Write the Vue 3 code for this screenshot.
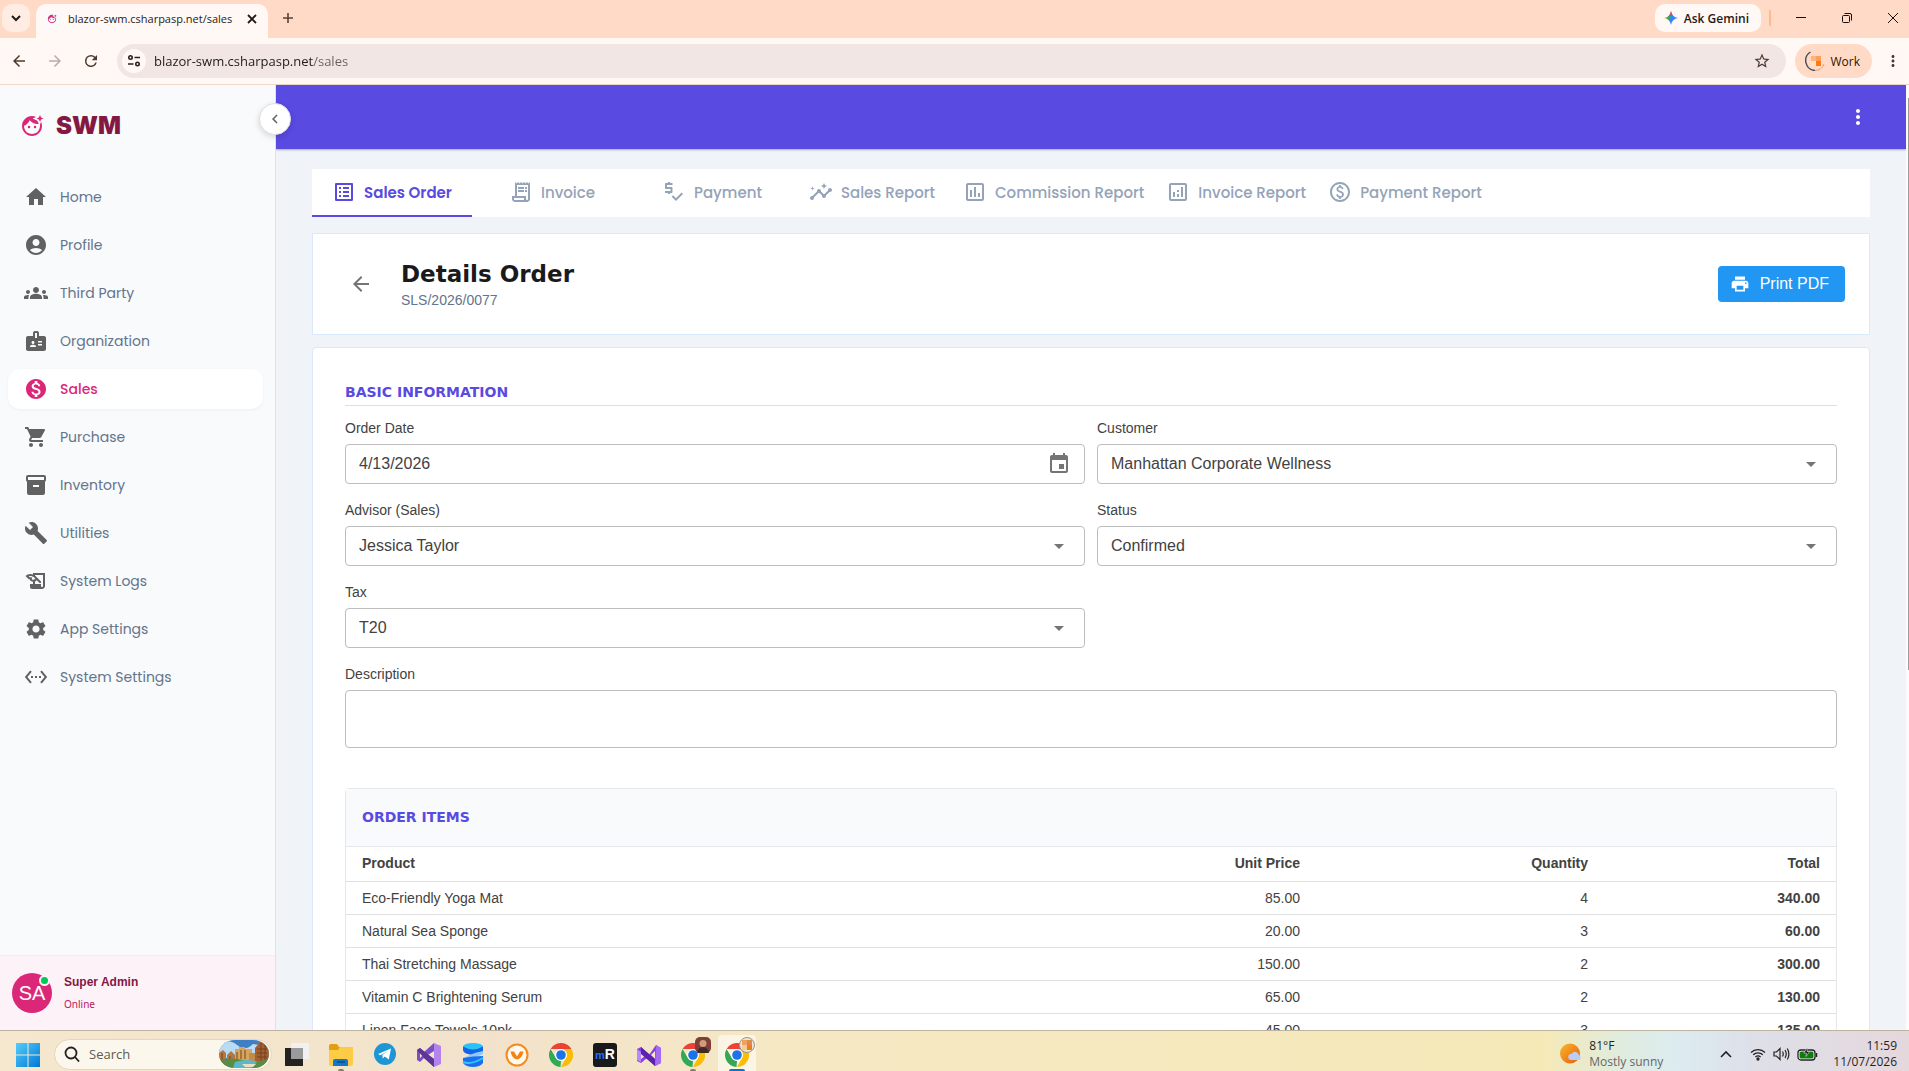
<script setup>
import { ref } from 'vue'

const icons = {
  home: 'M10 20v-6h4v6h5v-8h3L12 3 2 12h3v8z',
  profile: 'M12 2C6.48 2 2 6.48 2 12s4.48 10 10 10 10-4.48 10-10S17.52 2 12 2zm0 4c1.93 0 3.5 1.57 3.5 3.5S13.93 13 12 13s-3.5-1.57-3.5-3.5S10.07 6 12 6zm0 14c-2.03 0-4.43-.82-6.14-2.88C7.55 15.8 9.68 15 12 15s4.45.8 6.14 2.12C16.43 19.18 14.03 20 12 20z',
  groups: 'M12 12.75c1.63 0 3.07.39 4.24.9 1.08.48 1.76 1.56 1.76 2.73V18H6v-1.61c0-1.18.68-2.26 1.76-2.73 1.17-.52 2.61-.91 4.24-.91zM4 13c1.1 0 2-.9 2-2s-.9-2-2-2-2 .9-2 2 .9 2 2 2zm1.13 1.1c-.37-.06-.74-.1-1.13-.1-.99 0-1.93.21-2.78.58C.48 14.9 0 15.62 0 16.43V18h4.5v-1.61c0-.83.23-1.61.63-2.29zM20 13c1.1 0 2-.9 2-2s-.9-2-2-2-2 .9-2 2 .9 2 2 2zm4 3.43c0-.81-.48-1.53-1.22-1.85-.85-.37-1.79-.58-2.78-.58-.39 0-.76.04-1.13.1.4.68.63 1.46.63 2.29V18H24v-1.57zM12 6c1.66 0 3 1.34 3 3s-1.34 3-3 3-3-1.34-3-3 1.34-3 3-3z',
  badge: 'M20 7h-5V4c0-1.1-.9-2-2-2h-2c-1.1 0-2 .9-2 2v3H4c-1.1 0-2 .9-2 2v11c0 1.1.9 2 2 2h16c1.1 0 2-.9 2-2V9c0-1.1-.9-2-2-2zM9 12c.83 0 1.5.67 1.5 1.5S9.83 15 9 15s-1.5-.67-1.5-1.5S8.17 12 9 12zm3 6H6v-.75c0-1 2-1.5 3-1.5s3 .5 3 1.5V18zm1-9h-2V4h2v5zm5 7.5h-4V15h4v1.5zm0-3h-4V12h4v1.5z',
  money: 'M12 2C6.48 2 2 6.48 2 12s4.48 10 10 10 10-4.48 10-10S17.52 2 12 2zm1.41 16.09V20h-2.67v-1.93c-1.71-.36-3.16-1.46-3.27-3.4h1.96c.1 1.05.82 1.87 2.65 1.87 1.96 0 2.4-.98 2.4-1.59 0-.83-.44-1.61-2.67-2.14-2.48-.6-4.18-1.62-4.18-3.67 0-1.72 1.39-2.84 3.11-3.21V4h2.67v1.95c1.86.45 2.79 1.86 2.85 3.39H14.3c-.05-1.11-.64-1.87-2.22-1.87-1.5 0-2.4.68-2.4 1.64 0 .84.65 1.39 2.67 1.91s4.18 1.39 4.18 3.91c-.01 1.83-1.38 2.83-3.12 3.16z',
  cart: 'M7 18c-1.1 0-1.99.9-1.99 2S5.9 22 7 22s2-.9 2-2-.9-2-2-2zM1 2v2h2l3.6 7.59-1.35 2.45c-.16.28-.25.61-.25.96 0 1.1.9 2 2 2h12v-2H7.42c-.14 0-.25-.11-.25-.25l.03-.12.9-1.63h7.45c.75 0 1.41-.41 1.75-1.03l3.58-6.49c.08-.14.12-.31.12-.48 0-.55-.45-1-1-1H5.21l-.94-2H1zm16 16c-1.1 0-1.99.9-1.99 2s.89 2 1.99 2 2-.9 2-2-.9-2-2-2z',
  box: 'M20 2H4c-1 0-2 .9-2 2v3.01c0 .72.43 1.34 1 1.69V20c0 1.1 1.1 2 2 2h14c.9 0 2-.9 2-2V8.7c.57-.35 1-.97 1-1.69V4c0-1.1-1-2-2-2zm-5 12H9v-2h6v2zm5-7H4V4h16v3z',
  wrench: 'M22.7 19l-9.1-9.1c.9-2.3.4-5-1.5-6.9-2-2-5-2.4-7.4-1.3L9 6 6 9 1.6 4.7C.4 7.1.9 10.1 2.9 12.1c1.9 1.9 4.6 2.4 6.9 1.5l9.1 9.1c.4.4 1 .4 1.4 0l2.3-2.3c.5-.4.5-1.1.1-1.4z',
  logs: 'M9 4v1.38c-.83-.33-1.72-.5-2.61-.5-1.79 0-3.58.68-4.95 2.05l3.33 3.33h1.11v1.11c.86.86 1.98 1.31 3.11 1.36V15H6v3c0 1.1.9 2 2 2h10c1.66 0 3-1.34 3-3V4H9zm-1.11 6.41V8.26H5.61L4.57 7.22a5.07 5.07 0 0 1 1.82-.34c1.34 0 2.59.52 3.54 1.46l1.41 1.41-.2.2a2.7 2.7 0 0 1-1.92.8c-.47 0-.93-.12-1.33-.34zM19 17c0 .55-.45 1-1 1s-1-.45-1-1v-2h-6v-2.59c.57-.23 1.1-.57 1.56-1.03l.2-.2L15.59 14H17v-1.41l-6-5.97V6h8v11z',
  gear: 'M19.14 12.94c.04-.3.06-.61.06-.94 0-.32-.02-.64-.07-.94l2.03-1.58c.18-.14.23-.41.12-.61l-1.92-3.32c-.12-.22-.37-.29-.59-.22l-2.39.96c-.5-.38-1.03-.7-1.62-.94l-.36-2.54c-.04-.24-.24-.41-.48-.41h-3.84c-.24 0-.43.17-.47.41l-.36 2.54c-.59.24-1.13.57-1.62.94l-2.39-.96c-.22-.08-.47 0-.59.22L2.74 8.87c-.12.21-.08.47.12.61l2.03 1.58c-.05.3-.09.63-.09.94s.02.64.07.94l-2.03 1.58c-.18.14-.23.41-.12.61l1.92 3.32c.12.22.37.29.59.22l2.39-.96c.5.38 1.03.7 1.62.94l.36 2.54c.05.24.24.41.48.41h3.84c.24 0 .44-.17.47-.41l.36-2.54c.59-.24 1.13-.56 1.62-.94l2.39.96c.22.08.47 0 .59-.22l1.92-3.32c.12-.22.07-.47-.12-.61l-2.01-1.58zM12 15.6c-1.98 0-3.6-1.62-3.6-3.6s1.62-3.6 3.6-3.6 3.6 1.62 3.6 3.6-1.62 3.6-3.6 3.6z',
  ethernet: 'M7.77 6.76L6.23 5.48.82 12l5.41 6.52 1.54-1.28L3.42 12l4.35-5.24zM7 13h2v-2H7v2zm10-2h-2v2h2v-2zm-6 2h2v-2h-2v2zm6.77-7.52l-1.54 1.28L20.58 12l-4.35 5.24 1.54 1.28L23.18 12l-5.41-6.52z',
  list: 'M19 5v14H5V5h14m1.1-2H3.9c-.5 0-.9.4-.9.9v16.2c0 .4.4.9.9.9h16.2c.4 0 .9-.5.9-.9V3.9c0-.5-.5-.9-.9-.9zM11 7h6v2h-6V7zm0 4h6v2h-6v-2zm0 4h6v2h-6zM7 7h2v2H7zm0 4h2v2H7zm0 4h2v2H7z',
  receipt: 'M19.5 3.5L18 2l-1.5 1.5L15 2l-1.5 1.5L12 2l-1.5 1.5L9 2 7.5 3.5 6 2v14H3v3c0 1.66 1.34 3 3 3h12c1.66 0 3-1.34 3-3V2l-1.5 1.5zM15 20H6c-.55 0-1-.45-1-1v-1h10v2zm4-1c0 .55-.45 1-1 1s-1-.45-1-1v-3H8V5h11v14zM9 7h6v2H9zm7 0h2v2h-2zM9 10h6v2H9zm7 0h2v2h-2z',
  priceCheck: 'M10.5 3H8V2H6v1H4c-.55 0-1 .45-1 1v4c0 .55.45 1 1 1h4.500v2H3v2h3v1h2v-1h1.500c.55 0 1-.45 1-1V8c0-.55-.45-1-1-1H5V5h5.500V3zM19.590 12.520l-5.660 5.650-2.830-2.830-1.420 1.420L13.930 21 21 13.930z',
  insights: 'M21 8c-1.45 0-2.26 1.44-1.93 2.51l-3.55 3.56c-.3-.09-.74-.09-1.04 0l-2.55-2.55C12.27 10.45 11.46 9 10 9c-1.45 0-2.27 1.44-1.93 2.52l-4.56 4.55C2.44 15.74 1 16.55 1 18c0 1.1.9 2 2 2 1.45 0 2.26-1.44 1.93-2.51l4.55-4.56c.3.09.74.09 1.04 0l2.55 2.55C12.73 16.55 13.54 18 15 18c1.45 0 2.27-1.44 1.93-2.52l3.56-3.55c1.07.33 2.51-.48 2.51-1.93 0-1.1-.9-2-2-2zM15 9l.94-2.07L18 6l-2.06-.93L15 3l-.92 2.07L12 6l2.08.93zM3.5 11L4 9l2-.5L4 8l-.5-2L3 8l-2 .5L3 9z',
  assessment: 'M19 3H5c-1.1 0-2 .9-2 2v14c0 1.1.9 2 2 2h14c1.1 0 2-.9 2-2V5c0-1.1-.9-2-2-2zm0 16H5V5h14v14zM7 10h2v7H7zm4-3h2v10h-2zm4 6h2v4h-2z',
  analytics: 'M19 3H5c-1.1 0-2 .9-2 2v14c0 1.1.9 2 2 2h14c1.1 0 2-.9 2-2V5c0-1.1-.9-2-2-2zm0 16H5V5h14v14zM7 12h2v5H7zm8-5h2v10h-2zm-4 7h2v3h-2zm0-4h2v2h-2z',
  paid: 'M12 2C6.48 2 2 6.48 2 12s4.48 10 10 10 10-4.48 10-10S17.52 2 12 2zm0 18c-4.41 0-8-3.59-8-8s3.59-8 8-8 8 3.59 8 8-3.59 8-8 8zm.89-8.9c-1.78-.59-2.64-.96-2.64-1.9 0-1.02 1.11-1.39 1.81-1.39 1.31 0 1.79.99 1.9 1.34l1.58-.67c-.15-.44-.82-1.91-2.66-2.23V5h-1.75v1.26c-2.6.56-2.62 2.85-2.62 2.96 0 2.27 2.25 2.91 3.35 3.31 1.58.56 2.28 1.07 2.28 2.03 0 1.13-1.05 1.61-1.98 1.61-1.82 0-2.34-1.87-2.4-2.09l-1.66.67c.63 2.19 2.28 2.78 3.02 2.96V19h1.75v-1.24c.52-.09 3.02-.59 3.02-3.22.01-1.39-.6-2.61-3-3.44z',
  back: 'M20 11H7.83l5.59-5.59L12 4l-8 8 8 8 1.41-1.41L7.83 13H20v-2z',
  forward: 'M12 4l-1.41 1.41L16.17 11H4v2h12.17l-5.58 5.59L12 20l8-8z',
  chevron: 'M15.41 7.41L14 6l-6 6 6 6 1.41-1.41L10.83 12z',
  print: 'M19 8H5c-1.66 0-3 1.34-3 3v6h4v4h12v-4h4v-6c0-1.66-1.34-3-3-3zm-3 11H8v-5h8v5zm3-7c-.55 0-1-.45-1-1s.45-1 1-1 1 .45 1 1-.45 1-1 1zm-1-9H6v4h12V3z',
  event: 'M17 12h-5v5h5v-5zM16 1v2H8V1H6v2H5c-1.11 0-1.99.9-1.99 2L3 19c0 1.1.89 2 2 2h14c1.1 0 2-.9 2-2V5c0-1.1-.9-2-2-2h-1V1h-2zm3 18H5V8h14v11z',
  drop: 'M7 10l5 5 5-5z',
  dots: 'M12 8c1.1 0 2-.9 2-2s-.9-2-2-2-2 .9-2 2 .9 2 2 2zm0 2c-1.1 0-2 .9-2 2s.9 2 2 2 2-.9 2-2-.9-2-2-2zm0 6c-1.1 0-2 .9-2 2s.9 2 2 2 2-.9 2-2-.9-2-2-2z',
  reload: 'M17.65 6.35A7.95 7.95 0 0 0 12 4a8 8 0 1 0 7.73 10h-2.08A6 6 0 1 1 12 6c1.66 0 3.14.69 4.22 1.78L13 11h7V4z',
  star: 'M22 9.24l-7.19-.62L12 2 9.19 8.63 2 9.24l5.46 4.73L5.82 21 12 17.27 18.18 21l-1.63-7.03L22 9.24zM12 15.4l-3.76 2.27 1-4.28-3.32-2.88 4.38-.38L12 6.1l1.71 4.04 4.38.38-3.32 2.88 1 4.28L12 15.4z',
  face: 'M19.89 10.75c.07.41.11.82.11 1.25 0 4.41-3.59 8-8 8s-8-3.59-8-8c0-.05.01-.1 0-.14 2.6-.98 4.69-2.99 5.74-5.55C11.58 8.56 14.37 10 17.5 10c.45 0 .89-.04 1.33-.1l-.6-1.32-.88-1.93-1.93-.88-2.79-1.27 2.79-1.27.71-.32C14.87 2.33 13.47 2 12 2 6.48 2 2 6.48 2 12s4.48 10 10 10 10-4.48 10-10c0-1.47-.33-2.87-.9-4.13l-1.21 2.88zM9 11.75a1.25 1.25 0 1 0 0 2.5 1.25 1.25 0 0 0 0-2.5zm6 0a1.25 1.25 0 1 0 0 2.5 1.25 1.25 0 0 0 0-2.5zM20 1l-1.1 2.4-2.4 1.1 2.4 1.1L20 8l1.1-2.4 2.4-1.1-2.4-1.1z',
}

const nav = [
  ['Home', 'home'],
  ['Profile', 'profile'],
  ['Third Party', 'groups'],
  ['Organization', 'badge'],
  ['Sales', 'money'],
  ['Purchase', 'cart'],
  ['Inventory', 'box'],
  ['Utilities', 'wrench'],
  ['System Logs', 'logs'],
  ['App Settings', 'gear'],
  ['System Settings', 'ethernet'],
]

const tabs = [
  ['Sales Order', 'list'],
  ['Invoice', 'receipt'],
  ['Payment', 'priceCheck'],
  ['Sales Report', 'insights'],
  ['Commission Report', 'assessment'],
  ['Invoice Report', 'analytics'],
  ['Payment Report', 'paid'],
]

const selects = [
  { id: 'customer', label: 'Customer', value: 'Manhattan Corporate Wellness' },
  { id: 'advisor', label: 'Advisor (Sales)', value: 'Jessica Taylor' },
  { id: 'status', label: 'Status', value: 'Confirmed' },
  { id: 'tax', label: 'Tax', value: 'T20' },
]

const items = [
  ['Eco-Friendly Yoga Mat', '85.00', '4', '340.00'],
  ['Natural Sea Sponge', '20.00', '3', '60.00'],
  ['Thai Stretching Massage', '150.00', '2', '300.00'],
  ['Vitamin C Brightening Serum', '65.00', '2', '130.00'],
  ['Linen Face Towels 10pk', '45.00', '3', '135.00'],
]

const orderDate = ref('4/13/2026')
const description = ref('')
const address = ref('blazor-swm.csharpasp.net/sales')
</script>

<template>
  <div class="screen">
    <header class="browser">
      <div class="tabstrip">
        <button class="tab-search" aria-label="Search tabs">
          <svg width="16" height="16" viewBox="0 0 16 16" fill="none"><path d="M4 6l4 4 4-4" stroke="currentColor" stroke-width="2" /></svg>
        </button>
        <div class="page-tab">
          <span class="favicon"><svg width="10" height="10" viewBox="0 0 24 24"><path :d="icons.face" /></svg></span>
          <span class="page-tab-title">blazor-swm.csharpasp.net/sales</span>
          <button class="plain" aria-label="Close tab">
            <svg width="10" height="10" viewBox="0 0 10 10"><path d="M1 1l8 8M9 1l-8 8" stroke="currentColor" stroke-width="1.800" /></svg>
          </button>
        </div>
        <button class="plain new-tab" aria-label="New tab">
          <svg width="12" height="12" viewBox="0 0 12 12"><path d="M6 1v10M1 6h10" stroke="currentColor" stroke-width="1.600" /></svg>
        </button>
        <div class="window-tools">
          <button class="gemini">
            <svg width="14" height="14" viewBox="0 0 14 14">
              <defs>
                <linearGradient id="gem" x1="0" y1="0.3" x2="1" y2="0.6">
                  <stop offset="0" stop-color="#fbbc04" /><stop offset=".35" stop-color="#34a853" /><stop offset=".55" stop-color="#3186ff" /><stop offset="1" stop-color="#3186ff" />
                </linearGradient>
              </defs>
              <path d="M7 0c.7 4 3 6.300 7 7-4 .7-6.300 3-7 7-.7-4-3-6.300-7-7 4-.7 6.300-3 7-7z" fill="url(#gem)" />
              <path d="M7 0c.4 2 1 3.500 2 4.700L5 5C6 3.600 6.600 2 7 0z" fill="#ea4350" />
            </svg>
            Ask Gemini
          </button>
          <span class="bar"></span>
          <button class="win-btn" aria-label="Minimize"><svg width="10" height="10" viewBox="0 0 10 10"><path d="M0 4.500h10" stroke="currentColor" /></svg></button>
          <button class="win-btn" aria-label="Restore"><svg width="10" height="10" viewBox="0 0 10 10" fill="none" stroke="currentColor"><rect x=".5" y="2.500" width="7" height="7" rx="1" /><path d="M2.500.5H8a1.500 1.500 0 0 1 1.500 1.500v5.500" /></svg></button>
          <button class="win-btn last" aria-label="Close"><svg width="10" height="10" viewBox="0 0 10 10"><path d="M0 0l10 10M10 0L0 10" stroke="currentColor" /></svg></button>
        </div>
      </div>
      <div class="toolbar">
        <button class="tool" aria-label="Back"><svg width="18" height="18" viewBox="0 0 24 24"><path :d="icons.back" /></svg></button>
        <button class="tool dim" aria-label="Forward"><svg width="18" height="18" viewBox="0 0 24 24"><path :d="icons.forward" /></svg></button>
        <button class="tool" aria-label="Reload"><svg width="18" height="18" viewBox="0 0 24 24"><path :d="icons.reload" /></svg></button>
        <div class="omnibox">
          <button class="site-info" aria-label="Site information">
            <svg width="14" height="14" viewBox="0 0 14 14" fill="none" stroke="currentColor" stroke-width="1.600"><circle cx="3.500" cy="3.500" r="1.700" /><path d="M7.500 3.500H13M1 10h5.500" /><circle cx="10.500" cy="10" r="1.700" /></svg>
          </button>
          <input v-model="address" class="address" type="text" aria-label="Address" />
          <button class="plain" aria-label="Bookmark"><svg width="18" height="18" viewBox="0 0 24 24"><path :d="icons.star" /></svg></button>
        </div>
        <button class="work">
          <svg width="20" height="20" viewBox="0 0 20 20">
            <path d="M5.500 1A10 10 0 0 0 10 19.500" fill="none" stroke="#4b4a55" stroke-width="1.400" />
            <path d="M10 19.500A10 10 0 0 0 19 13" fill="none" stroke="#e0a070" />
            <path d="M6 5h5v5H6z" fill="#ffb27a" /><path d="M11 5h5v5h-5z" fill="#ff9f5a" /><path d="M6 10h5v5H6z" fill="#ffe3c8" /><path d="M11 10h5v5h-5z" fill="#ff7a0f" />
          </svg>
          Work
        </button>
        <button class="plain menu" aria-label="Browser menu"><svg width="18" height="18" viewBox="0 0 24 24"><path :d="icons.dots" /></svg></button>
      </div>
    </header>

    <div class="app">
      <aside class="sidebar">
        <div class="brand">
          <svg class="brand-icon" width="24" height="24" viewBox="0 0 24 24"><path :d="icons.face" /></svg>
          <span>SWM</span>
        </div>
        <button class="collapse" aria-label="Collapse sidebar"><svg width="18" height="18" viewBox="0 0 24 24"><path :d="icons.chevron" /></svg></button>
        <nav class="nav">
          <a v-for="[label, icon] in nav" :key="label" href="#" :class="{ active: label === 'Sales' }">
            <svg width="24" height="24" viewBox="0 0 24 24"><path :d="icons[icon]" /></svg>
            {{ label }}
          </a>
        </nav>
        <div class="user">
          <div class="avatar">SA<span class="presence"></span></div>
          <div class="user-text">
            <div class="user-name">Super Admin</div>
            <div class="user-state">Online</div>
          </div>
        </div>
      </aside>

      <div class="content">
        <div class="appbar">
          <button class="plain" aria-label="More"><svg width="24" height="24" viewBox="0 0 24 24"><path :d="icons.dots" /></svg></button>
        </div>
        <main class="main">
          <nav class="tabs">
            <a v-for="([label, icon], i) in tabs" :key="label" href="#" :class="{ active: i === 0 }">
              <svg width="24" height="24" viewBox="0 0 24 24"><path :d="icons[icon]" /></svg>
              {{ label }}
            </a>
          </nav>

          <section class="title-card">
            <button class="go-back" aria-label="Back to orders"><svg width="24" height="24" viewBox="0 0 24 24"><path :d="icons.back" /></svg></button>
            <div class="titles">
              <h1>Details Order</h1>
              <p>SLS/2026/0077</p>
            </div>
            <button class="print">
              <svg width="20" height="20" viewBox="0 0 24 24"><path :d="icons.print" /></svg>
              Print PDF
            </button>
          </section>

          <section class="form-card">
            <h2 class="section-title">BASIC INFORMATION</h2>
            <form class="form">
              <div class="field">
                <label for="order-date">Order Date</label>
                <div class="control">
                  <input id="order-date" v-model="orderDate" type="text" />
                  <svg width="24" height="24" viewBox="0 0 24 24"><path :d="icons.event" /></svg>
                </div>
              </div>
              <div v-for="s in selects" :key="s.id" class="field">
                <label :for="s.id">{{ s.label }}</label>
                <div class="control">
                  <select :id="s.id"><option>{{ s.value }}</option></select>
                  <svg width="24" height="24" viewBox="0 0 24 24"><path :d="icons.drop" /></svg>
                </div>
              </div>
              <div class="field wide">
                <label for="description">Description</label>
                <textarea id="description" v-model="description"></textarea>
              </div>
            </form>

            <div class="items">
              <h2 class="items-title">ORDER ITEMS</h2>
              <table>
                <colgroup><col /><col class="w-mid" /><col class="w-mid" /><col class="w-end" /></colgroup>
                <thead>
                  <tr><th>Product</th><th>Unit Price</th><th>Quantity</th><th>Total</th></tr>
                </thead>
                <tbody>
                  <tr v-for="row in items" :key="row[0]"><td v-for="cell in row" :key="cell">{{ cell }}</td></tr>
                </tbody>
              </table>
            </div>
          </section>
        </main>
      </div>
      <div class="scroll"><div class="thumb"></div></div>
    </div>

    <footer class="taskbar">
      <button class="task" aria-label="Start">
        <svg width="24" height="24" viewBox="0 0 24 24">
          <defs><linearGradient id="win" x1="0" y1="0" x2="1" y2="1"><stop offset="0" stop-color="#55cdfd" /><stop offset="1" stop-color="#0078d4" /></linearGradient></defs>
          <path d="M0 0h11.500v11.500H0zM12.500 0H24v11.500H12.500zM0 12.500h11.500V24H0zM12.500 12.500H24V24H12.500z" fill="url(#win)" />
        </svg>
      </button>
      <label class="search">
        <svg width="16" height="16" viewBox="0 0 16 16" fill="none" stroke="#222" stroke-width="1.800"><circle cx="7" cy="7" r="5.500" /><path d="M11 11l4 4.500" /></svg>
        <input type="text" placeholder="Search" aria-label="Search" />
        <svg width="50" height="28" viewBox="0 0 50 28">
          <defs><clipPath id="oval"><rect width="50" height="28" rx="16" /></clipPath></defs>
          <g clip-path="url(#oval)">
            <rect width="50" height="28" fill="#3f7fc4" />
            <path d="M0 4q10-6 18 1t16-1l16 2v12H0z" fill="#b9dbf3" />
            <path d="M0 13l4-3 3 3v12H0zM8 15l4-4 4 4v8H8z" fill="#b5763f" />
            <path d="M16 9h4V7h6v2h7v14H16z" fill="#d9a55c" />
            <path d="M30 13h7v9h-7z" fill="#c48a4c" />
            <path d="M36 8l6-7 8 6v18H36z" fill="#a85f2e" />
            <path d="M38 9h10M38 13h10M38 17h10M42 3v18M46 5v16M18 12v7M22 10v9M26 10v9M11 16v5M3 13v8" stroke="#6d4426" />
            <path d="M0 20q12-3 24 0t26-1v9H0z" fill="#5c8c43" />
            <path d="M16 22q14-4 22 0l-6 6H14z" fill="#5bb8c9" />
            <path d="M23 24h14l-3 3h-8z" fill="#e8dfc4" />
          </g>
        </svg>
      </label>
      <button class="task" aria-label="Task view">
        <svg width="24" height="24" viewBox="0 0 24 24"><rect y="5" width="18" height="18" fill="#222" /><rect x="6" y="0" width="18" height="16" fill="#f1f1f1" /><rect x="6" y="5" width="12" height="11" fill="#9a9a9a" /></svg>
      </button>
      <button class="task" aria-label="File Explorer">
        <svg width="24" height="24" viewBox="0 0 24 24"><path d="M0 3q0-2 2-2h6l2 3h12q2 0 2 2v15H0z" fill="#e0a011" /><path d="M0 7h9l2-3h11q2 0 2 2v15q0 2-2 2H2q-2 0-2-2z" fill="#fdcb45" /><path d="M4 23v-5q0-2 2-2h11q2 0 2 2v5z" fill="#1277c9" /><path d="M8 19h8" stroke="#0a5596" stroke-width="2" /></svg>
        <i class="open"></i>
      </button>
      <button class="task" aria-label="Telegram">
        <svg width="22" height="22" viewBox="0 0 22 22"><circle cx="11" cy="11" r="11" fill="#1f96d4" /><path d="M4 11l13-5.500-2.200 11-4-3-2 2-.5-3.500L14 8l-7.500 4.200z" fill="#fff" /></svg>
      </button>
      <button class="task" aria-label="Visual Studio">
        <svg width="24" height="24" viewBox="0 0 24 24"><path d="M0 7l3-2 4 4L17 0v8l-6 4 6 4v8L7 15l-4 4-3-2zM3 9v6l3-3z" fill="#7a4fc0" fill-rule="evenodd" /><path d="M0 7l3-2 14 11v8L7 15z" fill="#5d3594" /><path d="M17 0l7 3v18l-7 3z" fill="#b583ee" /></svg>
      </button>
      <button class="task" aria-label="Database tool">
        <svg width="22" height="24" viewBox="0 0 22 24"><ellipse cx="11" cy="3.500" rx="10" ry="3.500" fill="#27c3f5" /><path d="M1 3.500q10 6 20 0V8q-2 3-10 4Q1 11 1 7z" fill="#1563e8" /><path d="M21 8v3L5 18l-3-3q8-5 19-7z" fill="#8ec9fb" /><path d="M1 15q10-2 20-2v7q-3 4-10 4T1 20z" fill="#1a6ff0" /><path d="M1 19q9 3 20-4" fill="none" stroke="#2ec4f6" stroke-width="2" /></svg>
      </button>
      <button class="task" aria-label="Password manager">
        <svg width="24" height="24" viewBox="0 0 24 24"><circle cx="12" cy="12" r="10.500" fill="#fff9f0" stroke="#f58a1f" stroke-width="2" /><path d="M5.500 8.500H9l3 5 3-5h3.500q-1.500 7-6.500 8-5-1-6.500-8z" fill="#f5820f" /><path d="M9.500 8h5L12 12z" fill="#fff9f0" /></svg>
      </button>
      <button class="task" aria-label="Chrome">
        <svg width="24" height="24" viewBox="0 0 24 24"><path d="M12 6h10.400A12 12 0 0 1 12 24l5-9z" fill="#fbbc04" /><path d="M1.600 6A12 12 0 0 1 22.400 6H12z" fill="#ea4335" /><path d="M1.600 6l5.200 9L12 18l-.5 6A12 12 0 0 1 1.600 6z" fill="#34a853" /><circle cx="12" cy="12" r="6" fill="#fff" /><circle cx="12" cy="12" r="4.800" fill="#1a73e8" /></svg>
      </button>
      <button class="task" aria-label="Remote connections">
        <span class="mr"><b>m</b><em>R</em></span>
      </button>
      <button class="task" aria-label="Visual Studio Preview">
        <svg width="24" height="24" viewBox="0 0 24 24"><path d="M0 6l4-2 8 8 7-10 5 3v15l-6 3-8-8-6 5-4-2z" fill="#8b3fe0" /><path d="M4 9l4 4-4 3zM18 8v8l-4-4z" fill="#f5e8c4" /><path d="M19 2l5 3v15l-6 3z" fill="#a66bf5" /><path d="M0 6l4 3v10l-4-2z" fill="#b78af8" /><path d="M4 4l14 12v7L4 11z" fill="#5a22ad" /></svg>
      </button>
      <button v-for="who in ['person', 'work']" :key="who" class="task" :class="{ current: who === 'work' }" aria-label="Chrome profile">
        <svg width="24" height="24" viewBox="0 0 24 24"><path d="M12 6h10.400A12 12 0 0 1 12 24l5-9z" fill="#fbbc04" /><path d="M1.600 6A12 12 0 0 1 22.400 6H12z" fill="#ea4335" /><path d="M1.600 6l5.200 9L12 18l-.5 6A12 12 0 0 1 1.600 6z" fill="#34a853" /><circle cx="12" cy="12" r="6" fill="#fff" /><circle cx="12" cy="12" r="4.800" fill="#1a73e8" /></svg>
        <svg v-if="who === 'person'" class="corner" width="16" height="16" viewBox="0 0 16 16"><rect width="16" height="16" rx="5" fill="#7d3f37" /><circle cx="8" cy="6.500" r="3.500" fill="#d39b7b" /><path d="M2 16q1-6 6-6t6 6z" fill="#402a28" /></svg>
        <svg v-else class="corner" width="16" height="16" viewBox="0 0 16 16"><circle cx="8" cy="8" r="7.500" fill="#efe4cf" stroke="#9b958a" /><path d="M3 3h5v5H3z" fill="#f0a060" /><path d="M8 3h5v5H8z" fill="#e08a45" /><path d="M3 8h5v5H3z" fill="#f5c99c" /><path d="M8 8h5v5H8z" fill="#ee7c1c" /></svg>
        <i :class="who === 'work' ? 'focus' : 'open'"></i>
      </button>

      <div class="tray">
        <div class="weather">
          <svg width="22" height="22" viewBox="0 0 22 22"><defs><linearGradient id="sun" x1="0" y1="0" x2="1" y2="1"><stop offset="0" stop-color="#f7b92b" /><stop offset="1" stop-color="#ea5a0c" /></linearGradient></defs><circle cx="10" cy="10.500" r="10" fill="url(#sun)" /><path d="M11 17a3 3 0 0 1 .5-6 4 4 0 0 1 7.500 1.500 2.500 2.500 0 0 1 .5 4.500z" fill="#b9cef5" /></svg>
          <div><div>81°F</div><div class="soft">Mostly sunny</div></div>
        </div>
        <svg class="up" width="12" height="8" viewBox="0 0 12 8" fill="none"><path d="M1 7l5-5 5 5" stroke="#222" stroke-width="1.600" /></svg>
        <div class="status">
          <svg width="16" height="14" viewBox="0 0 16 14" fill="none" stroke="#222" stroke-width="1.300"><path d="M1 5.500a10 10 0 0 1 14 0M3.200 7.700a7 7 0 0 1 9.600 0M5.400 10a4 4 0 0 1 5.200 0" /><circle cx="8" cy="12" r="1" fill="#222" /></svg>
          <svg width="17" height="14" viewBox="0 0 17 14" fill="none" stroke="#222" stroke-width="1.200"><path d="M1 5h2.500L7 1.500v11L3.500 9H1zM9.500 4.500q1.500 2.500 0 5M12 3q2.500 4 0 8M14.300 1.500q3.200 5.500 0 11" /></svg>
          <svg width="21" height="14" viewBox="0 0 21 14"><rect x="1" y="3" width="17" height="10" rx="3" fill="#fff" stroke="#222" stroke-width="1.300" /><rect x="2.500" y="4.500" width="14" height="7" rx="1.500" fill="#107c10" /><path d="M19.500 6v4" stroke="#222" stroke-width="1.500" /><path d="M10.500 0L7 6h2.500L9 9.500 12.500 4.500H10z" fill="#111" stroke="#fff" stroke-width=".5" /></svg>
        </div>
        <div class="clock"><div>11:59</div><div>11/07/2026</div></div>
      </div>
    </footer>
  </div>
</template>

<style>
body { overflow: hidden; }
</style>

<style scoped>
* { box-sizing: border-box; margin: 0; }
button, input, select, textarea { font: inherit; color: inherit; border: 0; background: none; padding: 0; outline: 0; }
svg { display: block; flex: none; }
svg:not([fill]) { fill: currentColor; }
a { text-decoration: none; color: inherit; }

.screen { height: 100vh; display: flex; flex-direction: column; font-family: Arial, "Liberation Sans", sans-serif; color: #424242; }

.browser { font-family: "Segoe UI", "Open Sans", sans-serif; color: #1f1b19; font-size: 13px; }
.tabstrip { height: 38px; background: #ffdbc7; display: flex; align-items: flex-start; padding: 4px 11px 0 2px; }
.tab-search { width: 28px; height: 28px; border-radius: 10px; background: #ffece2; display: grid; place-items: center; }
.page-tab { height: 34px; width: 232px; margin-left: 6px; padding: 0 11px 5px 8px; background: #fff8f5; border-radius: 10px 10px 0 0; display: flex; align-items: center; font-size: 11px; }
.page-tab-title { flex: 1; white-space: nowrap; }
.favicon { width: 16px; height: 16px; margin-right: 8px; display: grid; place-items: center; background: #f8fafc; color: #db2777; }
.plain { display: grid; place-items: center; }
.new-tab { width: 28px; height: 28px; margin-left: 6px; color: #5b4137; }
.window-tools { margin-left: auto; display: flex; align-items: center; }
.gemini { height: 28px; padding: 0 12px 0 9px; border-radius: 10px; background: #fff8f5; display: flex; align-items: center; gap: 6px; font-size: 12px; font-weight: 600; }
.bar { width: 2px; height: 16px; margin: 0 7px 0 8px; background: #ffb98c; }
.win-btn { width: 46px; height: 28px; display: grid; place-items: center; color: #111; }
.win-btn.last { width: 28px; justify-items: end; }

.toolbar { height: 47px; background: #fff8f5; border-bottom: 1px solid #f1d9cd; display: flex; align-items: center; padding: 0 7px 0 1px; color: #4f382e; }
.tool { width: 36px; height: 34px; display: grid; place-items: center; }
.tool.dim { color: #b9aca7; }
.omnibox { flex: 1; height: 34px; margin-left: 8px; padding: 0 15px 0 5px; border-radius: 17px; background: #f2e6e4; display: flex; align-items: center; gap: 8px; }
.site-info { width: 24px; height: 24px; border-radius: 50%; background: #fff8f5; display: grid; place-items: center; color: #2b211d; }
.address { flex: 1; color: transparent; background: linear-gradient(90deg, #1f1b19 160px, #6b5f5b 160px); background-clip: text; }
.work { height: 34px; margin-left: 9px; padding: 0 12px 0 10px; border-radius: 17px; background: #ffdbc7; display: flex; align-items: center; gap: 5px; font-size: 12px; color: #2f1500; }
.menu { margin-left: 12px; }

.app { flex: 1; min-height: 0; display: flex; }
.sidebar { position: relative; flex: none; width: 276px; background: #f8fafc; border-right: 1px solid #dfe1e6; display: flex; flex-direction: column; }
.brand { height: 92px; padding: 29px 20px 0; display: flex; gap: 12px; font: 900 24px/24px "Arial Black", Inter, sans-serif; color: #831843; }
.brand-icon { color: #db2777; }
.collapse { position: absolute; right: -16px; top: 18px; z-index: 2; width: 32px; height: 32px; border-radius: 50%; background: #fff; border: 1px solid #e0e0e0; box-shadow: 0 2px 6px rgba(0, 0, 0, .15); display: grid; place-items: center; color: #616161; }
.nav { flex: 1; padding: 0 12px 0 8px; display: flex; flex-direction: column; gap: 8px; font-family: Poppins, Inter, sans-serif; font-size: 14px; font-feature-settings: "cv11"; color: #64748b; }
.nav a { height: 40px; padding-left: 16px; border-radius: 12px; display: flex; align-items: center; gap: 12px; }
.nav svg { color: #616161; }
.nav .active { background: #fff; color: #db2777; font-weight: 500; box-shadow: 0 1px 3px rgba(0, 0, 0, .05); }
.nav .active svg { color: inherit; }
.user { height: 75px; padding: 0 12px; background: #fdf2f8; border-top: 1px solid #fce7f3; display: flex; align-items: center; gap: 12px; }
.avatar { position: relative; width: 40px; height: 40px; border-radius: 50%; background: #db2777; color: #fff; font-size: 20px; line-height: 40px; text-align: center; }
.presence { position: absolute; right: 2px; top: 2px; width: 11px; height: 11px; border-radius: 50%; background: #00c853; border: 2px solid #fdf2f8; }
.user-text { padding-bottom: 2px; }
.user-name { font-size: 12px; font-weight: 700; line-height: 24px; color: #831843; }
.user-state { font: 10px/20px "Noto Sans", sans-serif; color: #be185d; }

.content { flex: 1; min-width: 0; display: flex; flex-direction: column; background: #f0f3f8; }
.appbar { flex: none; height: 64px; padding: 0 36px; background: #594ae2; color: #fff; display: flex; align-items: center; justify-content: flex-end; box-shadow: 0 1px 2px rgba(0, 0, 0, .3); }
.main { flex: 1; min-height: 0; overflow: hidden; padding: 20px 36px 0; }

.tabs { height: 48px; background: #fff; display: flex; font-family: Poppins, Inter, sans-serif; font-size: 15px; font-weight: 500; font-feature-settings: "cv11"; color: #94a3b8; }
.tabs a { min-width: 160px; padding: 0 11px; display: flex; align-items: center; justify-content: center; gap: 8px; border-bottom: 2px solid transparent; }
.tabs .active { color: #594ae2; font-weight: 600; border-color: #594ae2; }

.title-card { margin-top: 16px; padding: 24px; background: #fff; border: 1px solid #dbeafa; display: flex; align-items: center; }
.go-back { width: 48px; height: 48px; display: grid; place-items: center; color: #757575; }
.titles { flex: 1; margin-left: 16px; }
h1 { font: 900 23px/32px "Arial Black", "DejaVu Sans", sans-serif; color: #1a1a1a; }
.titles p { font-size: 14px; line-height: 20px; color: #64748b; }
.print { height: 36px; padding: 0 16px 0 12px; border-radius: 4px; background: #2196f3; color: #fff; font-size: 16px; display: flex; align-items: center; gap: 10px; }

.form-card { margin-top: 12px; padding: 32px; background: #fff; border: 1px solid #dbeafa; border-radius: 4px; }
.section-title, .items-title { font: 900 14px/25px "Arial Black", "DejaVu Sans", sans-serif; color: #594ae2; }
.section-title { border-bottom: 1px solid #dedede; }
.form { margin-top: 12px; display: grid; grid-template-columns: 1fr 1fr; gap: 16px 12px; }
.wide { grid-column: 1 / -1; }
label { display: block; font-size: 14px; line-height: 20px; }
.control { position: relative; margin-top: 6px; }
.control input, .control select, textarea { display: block; width: 100%; height: 40px; padding: 0 13px; font-size: 16px; border: 1px solid #bdbdbd; border-radius: 4px; appearance: none; background: #fff; }
.control select { padding-bottom: 2px; }
.control svg { position: absolute; right: 14px; top: 8px; color: #757575; pointer-events: none; }
textarea { height: 58px; margin-top: 6px; resize: none; }

.items { margin-top: 40px; border: 1px solid #e5e7eb; border-radius: 4px 4px 0 0; }
.items-title { padding: 16px; background: #f8fafc; border-bottom: 1px solid #e5e7eb; }
table { width: 100%; table-layout: fixed; border-collapse: separate; border-spacing: 0; font-size: 14px; }
.w-mid { width: 288px; }
.w-end { width: 232px; }
th, td { height: 33px; padding: 0 16px; text-align: right; border-bottom: 1px solid #e0e0e0; }
th { height: 35px; padding-bottom: 2px; }
th:first-child, td:first-child { text-align: left; }
td:last-child { font-weight: 700; }

.scroll { flex: none; width: 3px; background: #fcfcfc; }
.thumb { width: 1px; height: 572px; margin: 13px 0 0 2px; background: #9b9b9b; }

.taskbar { flex: none; height: 41px; padding-left: 6px; border-top: 1px solid #bdb3a0; background: linear-gradient(90deg, #f5e8ce 0, #f2e2cb 26%, #f5e8c4 40%, #f5e9b8 81%, #dfecdf 85%, #dcebf0 88%, #dedfe8 92%, #e5d8dc 100%); display: flex; align-items: center; font: 12px/16px "Segoe UI", "Open Sans", sans-serif; color: #1f1f1f; }
.task { position: relative; flex: none; width: 44px; height: 40px; padding-top: 12px; display: flex; justify-content: center; align-items: flex-start; }
.search { width: 218px; height: 31px; margin: 6px 3px 0 4px; padding: 0 2px 0 9px; border-radius: 16px; background: #fcf7ec; border: 1px solid #e2d6bd; display: flex; align-items: center; gap: 9px; font-size: 13px; }
.search input { flex: 1; min-width: 0; }
.search input::placeholder { color: #5e5a54; opacity: 1; }
.open, .focus { position: absolute; bottom: 0; height: 2px; width: 6px; border-radius: 2px 2px 0 0; background: #857c6c; }
.focus { width: 16px; background: #0078d4; }
.current::before { content: ""; position: absolute; inset: 4px 3px 0; background: rgba(255, 255, 255, .55); border-radius: 4px 4px 0 0; }
.current svg { position: relative; }
.task .corner { position: absolute; left: 24px; top: 6px; }
.mr { width: 24px; height: 24px; border-radius: 3px; background: #17191c; font: 700 14px/22px "Liberation Sans", sans-serif; text-align: center; }
.mr b { color: #2a6df5; font-size: 11px; }
.mr em { color: #fff; font-style: normal; }
.tray { margin-left: auto; padding: 5px 12px 0 0; display: flex; align-items: center; }
.weather { display: flex; align-items: center; gap: 7px; margin-right: 57px; }
.soft { color: #65676b; }
.up { margin-right: 18px; }
.status { display: flex; align-items: center; gap: 7px; margin-right: 15px; }
.clock { text-align: right; }
</style>
